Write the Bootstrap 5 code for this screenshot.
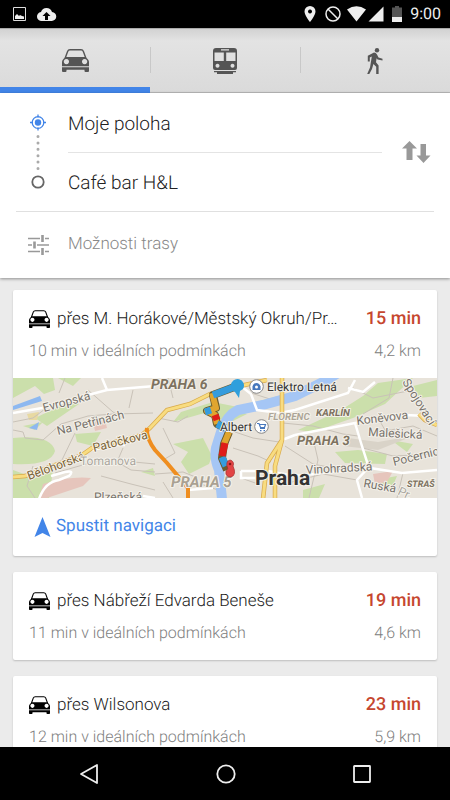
<!DOCTYPE html>
<html lang="cs">
<head>
<meta charset="utf-8">
<meta name="viewport" content="width=device-width, initial-scale=1">
<title>Trasa – Café bar H&amp;L</title>
<link href="https://cdn.jsdelivr.net/npm/bootstrap@5.3.0/dist/css/bootstrap.min.css" rel="stylesheet">
<style>
  body { font-family: Roboto, "Noto Sans", sans-serif; background: #ebebeb; color: #222; text-rendering: geometricPrecision; }
  svg { display: block; flex-shrink: 0; }
  .status-bar { height: 28px; background: #000; color: #eee; font-size: 16px; line-height: 28px; padding: 0 9px 0 13px; }
  .mode-tabs { height: 65px; background: linear-gradient(#d2d2d2, #e3e3e3 12px, #dadada); border-top: 1px solid #aaa; }
  .mode-tab { color: #555; border: 0; border-bottom: 1px solid #bbb; background: none; padding: 0; position: relative; }
  .mode-tab.active { border-bottom: 6px solid #4285e8; padding-top: 4px; }
  .mode-tab + .mode-tab::before { content: ""; position: absolute; left: 0; top: 18px; height: 26px; border-left: 1px solid #c8c8c8; }
  .search-panel { background: #fff; box-shadow: 0 1px 3px rgba(0,0,0,.4); position: relative; }
  .place-rail { width: 68px; padding-left: 24px; }
  .place-input { border: 0; height: 58px; width: 100%; padding: 1px 0 0; font-weight: 300; font-size: 19px; color: #222; background: none; text-rendering: inherit; }
  .place-input:first-child { height: 60px; border-bottom: 1px solid #e4e4e4; }
  .swap-btn { width: 68px; padding: 0 0 0 20px; border: 0; background: none; color: #999; }
  .options-btn { margin: 0 16px; border: 0; border-top: 1px solid #e0e0e0; background: none; color: #888; font-weight: 300; font-size: 17px; height: 67px; padding: 0 0 0 12px; gap: 19px; text-rendering: inherit; }
  .content-area { min-height: 0; padding: 12px 13px 0; }
  .route-card { background: #fff; border-radius: 2px; box-shadow: 0 1px 2px rgba(0,0,0,.2); margin-bottom: 16px; flex-shrink: 0; }
  .route-head { padding: 15px 16px 13px; height: 88px; }
  .route-line { gap: 7px; }
  .route-title { font-weight: 300; font-size: 17px; line-height: 28px; margin: 0; }
  .route-time { font-weight: 500; font-size: 18px; line-height: 28px; color: #c6472f; width: 60px; text-align: right; flex-shrink: 0; }
  .route-note { font-weight: 300; font-size: 16px; line-height: 20px; margin-top: 8px; color: #808080; }
  .route-map { height: 120px; width: 100%; }
  .start-link { color: #4285e8; font-size: 17px; height: 58px; padding-left: 21px; gap: 5px; }
  .system-bar { height: 53px; background: #000; padding: 0 20px; }
  .system-bar button { background: none; border: 0; padding: 0; }
  .map-name { font-size: 12px; fill: #77716b; }
  .map-name.on-main { fill: #7a6234; }
  .map-district { font-weight: 700; font-style: italic; fill: #7d7260; }
  .map-poi { font-size: 12px; fill: #333; }
  .halo text { paint-order: stroke; stroke: #f4f1ea; stroke-width: 2px; stroke-linejoin: round; }
</style>
<script src="https://cdn.jsdelivr.net/npm/bootstrap@5.3.0/dist/js/bootstrap.bundle.min.js"></script>
</head>
<body class="vh-100 d-flex flex-column overflow-hidden">

<svg width="0" height="0" class="position-absolute" aria-hidden="true">
  <symbol id="car" viewBox="0 0 27 23">
    <path d="M3.200 9 5.600 2.400Q6.200.8 8 .8H19Q20.800.8 21.400 2.400L23.800 9" fill="none" stroke="currentColor" stroke-width="1.400"/>
    <path fill="currentColor" fill-rule="evenodd" d="M3.300 8H23.700L26 10.500Q27 11.500 27 13V17.300H0V13Q0 11.500 1 10.500ZM4.400 10A2.600 2.600 0 1 0 4.410 10ZM22.600 10A2.600 2.600 0 1 0 22.610 10Z"/>
    <path fill="currentColor" d="M0 18.300H27V22Q27 23 26 23H23.500Q22.500 23 22.500 22V20.800H4.500V22Q4.500 23 3.500 23H1Q0 23 0 22Z"/>
  </symbol>
</svg>

<header class="status-bar d-flex align-items-center flex-shrink-0">
  <svg width="13" height="14" viewBox="0 0 13 14"><path d="M.5.5h12v13H.5z" fill="none" stroke="#ddd"/><path d="M2 12V9l2-2 2 2 1-1 2 1 2 .5V12z" fill="#eee"/></svg>
  <svg class="ms-2 me-auto" width="24" height="16" viewBox="0 0 24 16"><path fill="#eee" d="M8 15a4.500 4.500 0 0 1-1-9 5.800 5.800 0 0 1 11 0 4.500 4.500 0 0 1-.5 9z"/><path d="M12.500 6l4 4h-2.500v4h-3v-4H8.500z"/></svg>
  <svg width="12" height="16" viewBox="0 0 12 16"><path fill="#eee" fill-rule="evenodd" d="M6 0a5.500 5.500 0 0 1 5.500 5.500C11.500 9.500 6 16 6 16S.5 9.500.5 5.500A5.500 5.500 0 0 1 6 0m0 3.500a2 2 0 1 0 .01 0z"/></svg>
  <svg class="ms-2" width="18" height="16" viewBox="0 0 18 16"><g fill="none" stroke="#eee" stroke-width="1.500"><circle cx="9" cy="8" r="7"/><path d="M4 3l10 10"/></g></svg>
  <svg class="ms-1" width="42" height="16" viewBox="0 0 42 16"><path fill="#eee" d="M1 3.500Q10.500-3 20 3.500L10.500 15.500zM37.500.5v15H22.500z"/></svg>
  <svg class="ms-1" width="10" height="16" viewBox="0 0 10 16"><path fill="#555" d="M3 0h4v1.500h3V11H0V1.500h3z"/><path fill="#eee" d="M0 11h10v5H0z"/></svg>
  <span class="ms-2">9:00</span>
</header>

<nav class="mode-tabs d-flex flex-shrink-0" aria-label="Způsob dopravy">
  <button class="mode-tab active d-flex flex-fill w-100 justify-content-center align-items-center" aria-label="Autem" aria-pressed="true"><svg width="27" height="23"><use href="#car"/></svg></button>
  <button class="mode-tab d-flex flex-fill w-100 justify-content-center align-items-center" aria-label="Veřejnou dopravou">
    <svg width="24" height="26" viewBox="0 0 24 26"><path fill="currentColor" fill-rule="evenodd" d="M3 0H21Q24 0 24 3V20Q24 22 22 22H2Q0 22 0 20V3Q0 0 3 0ZM8 1.200V2.500H16V1.200ZM1.500 4.500V13H10.800V4.500ZM13.200 4.500V13H22.500V4.500ZM4.500 15.800A2 2 0 1 0 4.510 15.800ZM19.500 15.800A2 2 0 1 0 19.510 15.800Z"/><path fill="currentColor" d="M1 23H23V24.200H20V26H4V24.200H1z"/></svg>
  </button>
  <button class="mode-tab d-flex flex-fill w-100 justify-content-center align-items-center" aria-label="Pěšky">
    <svg width="16" height="26" viewBox="0 0 16 26"><circle cx="10" cy="2.200" r="2.200" fill="currentColor"/><path fill="currentColor" d="M7 4.500Q9 4.500 10 6.500L11.500 9.500 15.500 10.800V12.600L10.500 11.500 9.600 10.200 9 14.200 11.600 17.500V26H9.200V18.800L6.400 16 5 21 2.300 26H.2L3 19.500 4.800 8.500 2.800 9.500V13.500H.8V7.800Z"/></svg>
  </button>
</nav>

<section class="search-panel d-flex flex-column flex-shrink-0">
  <div class="d-flex align-items-center">
    <div class="place-rail flex-shrink-0">
      <svg width="28" height="118" viewBox="0 0 28 118" aria-hidden="true">
        <g stroke="#4285e8" fill="none" stroke-width="1.300"><circle cx="14" cy="29.500" r="5.800"/><path d="M14 21.500v3M14 34.500v3M6 29.500h3M19 29.500h3"/></g>
        <circle cx="14" cy="29.500" r="3.200" fill="#4285e8"/>
        <path d="M14 43.500V77" stroke="#aaa" stroke-width="3" stroke-linecap="round" stroke-dasharray="0 6.400"/>
        <circle cx="14" cy="89" r="5.700" fill="none" stroke="#666" stroke-width="1.800"/>
      </svg>
    </div>
    <div class="flex-grow-1">
      <input class="place-input d-block" type="text" value="Moje poloha" aria-label="Výchozí místo">
      <input class="place-input d-block" type="text" value="Café bar H&amp;L" aria-label="Cíl">
    </div>
    <button class="swap-btn flex-shrink-0" aria-label="Prohodit začátek a cíl">
      <svg width="29" height="22" viewBox="0 0 29 22"><path fill="currentColor" d="M7.500 0 15 7.500H10.500V19H4.500V7.500H0ZM21.500 22 14.500 14.500H18.500V3H24V14.500H28.500Z"/></svg>
    </button>
  </div>
  <button class="options-btn d-flex align-items-center text-start">
    <svg width="21" height="20" viewBox="0 0 21 20"><g stroke="#999" fill="none"><path stroke-width="1.300" d="M0 3.500h12M17 3.500h4M0 10h4M9 10h12M0 16.500h12M17 16.500h4"/><path stroke-width="2.600" d="M14.500 0v7M6.500 6.500v7M14.500 13v7"/></g></svg>
    Možnosti trasy
  </button>
</section>

<main class="content-area flex-grow-1 overflow-hidden d-flex flex-column">
  <article class="route-card">
    <div class="route-head">
      <div class="route-line d-flex align-items-center">
        <svg width="21" height="18" color="#000"><use href="#car"/></svg>
        <h2 class="route-title text-truncate flex-grow-1">přes M. Horákové/Městský Okruh/Pr…</h2>
        <span class="route-time">15 min</span>
      </div>
      <div class="route-note d-flex justify-content-between"><span>10 min v ideálních podmínkách</span><span>4,2 km</span></div>
    </div>
    <svg class="route-map" viewBox="0 0 424 120" preserveAspectRatio="xMidYMid slice" role="img" aria-label="Mapa trasy Prahou">
      <path fill="#e8e3da" d="M-200-50h824v220H-200z"/>
      <g fill="#cbdfab">
        <path d="M0 0H40L42 12 31 16 22 8 0 20zM45 0H68L60 8zM0 60Q38 56 42 73 38 88 0 86zM0 92 22 100 40 92 36 120H0zM22 40 60 22 66 26 34 48zM62 56 88 54 80 68 64 64z"/>
        <path d="M168 34 200 24 225 29 287 12V18L222 34 205 43 195 34 160 44zM160 66 190 60 199 78 196 86 176 96 168 84 175 74zM214 38 228 34 234 36 218 44z"/>
        <path d="M285 52 328 32 350 18 365 5 400 0 372 26 340 40 300 54zM322 74 345 72 374 76 372 86 332 85zM378 62 400 66 394 74zM400 8 424 2V18L406 20zM362 102 384 98 378 112zM290 112 312 106 306 120H290zM128 94 140 90 142 98zM10 48 30 44 22 52z"/>
      </g>
      <g fill="#e6c5bc"><path d="M30 106Q56 98 78 100L70 108 34 120H26zM80 44 92 42 94 50 82 53zM360 96 380 93 374 104 362 106z"/></g>
      <path fill="#d9d3c8" d="M335 60 365 64 400 58 365 72 330 68z"/>
      <path fill="#e8d9a2" d="M14 36 26 34 24 42 16 42z"/>
      <g stroke="#c9c2b8" fill="none" stroke-width="1">
        <path d="M0 52 10 54 12 60 30 62 48 46 75 38 100 36 140 35M62 55 48 84M42 95 80 84 100 82 142 86M88 98 118 106 142 112M110 70 104 84 118 92 142 94M75 12 100 34 110 40M52 0 46 15M0 44 20 40 36 28M120 12 116 30M150 50 162 75 150 82M145 40 165 44 175 38M142 96 170 94 185 100M155 0 160 20M220 70 245 78 258 84M222 54 240 60 266 64M228 100 245 106M272 68 300 86 330 92M270 45 300 48 330 56 345 58M275 105 310 96 344 102M350 70 380 78 424 76M360 55 400 48 424 58M365 40 372 52 390 56M380 0 376 20 350 36M340 10 360 20 400 12M390 95 384 120M300 60 305 82 296 120M182 104 205 112M20 88 14 108 22 120M235 14 260 22M150 104 160 120"/>
      </g>
      <path d="M0 28 27 18 29 23 0 32z" fill="#8db8f0"/><path d="M16 50 26 44 24 52z" fill="#8db8f0"/>
      <path d="M330-8 312 3 282 18 250 27 225 32Q213 38 208 54L203 70Q201 80 206 92L209 121" fill="none" stroke="#a5c6f5" stroke-width="10"/>
      <g fill="none" stroke="#fff" stroke-width="2.500">
        <path d="M0 35 29 30 75 17 94 12 142 8M89 0 94 12M26 121Q32 104 46 102L56 98Q62 92 52 94L38 98M79 72 100 67 112 67M228 8 238 16 244 32 267 35 282 32 335 15 342 2M335 10 350 14 362 4M228 93 255 93 282 98 357 90M228 93V100H252M282 57 342 45 392 37 415 38M342 45 348 65 356 90M357 90 389 95 424 92M355 90 344 102 349 120M269 62 282 57M175 112 200 110M142 120 130 118"/>
      </g>
      <g fill="none">
        <path stroke="#d9ab4c" stroke-width="4.500" d="M0 99 12 98 69 77 79 70 129 57 137 50 154 32 177 26 197 16 227 8 254 2M269 0V62L254 85 250 121M269 62 262 88 262 121M424 47 412 42 406 36"/>
        <path stroke="#f8dc80" stroke-width="3" d="M0 99 12 98 69 77 79 70 129 57 137 50 154 32 177 26 197 16 227 8 254 2M269 0V62L254 85 250 121M269 62 262 88 262 121M424 47 412 42 406 36"/>
        <path stroke="#ef8e20" stroke-width="4" d="M134 50Q133 60 142 72L154 85 175 110V121"/>
      </g>

      <g class="halo">
        <text class="map-name" transform="translate(31 34) rotate(-15)">Evropská</text>
        <text class="map-name" transform="translate(45 57) rotate(-14)">Na Petřinách</text>
        <text class="map-name on-main" transform="translate(81 74) rotate(-14)">Patočkova</text>
        <text class="map-name on-main" transform="translate(16 102) rotate(-20)">Bělohorská</text>
        <text class="map-name" x="67" y="87" fill-opacity=".6">Tomanova</text>
        <text class="map-name" x="81" y="123">Plzeňská</text>
        <text class="map-name" transform="translate(344 47) rotate(-7)">Koněvova</text>
        <text class="map-name" transform="translate(355 58) rotate(3)">Malešická</text>
        <text class="map-name" transform="translate(381 88) rotate(-14)">Počernic</text>
        <text class="map-name" transform="translate(293 96) rotate(-3)">Vinohradská</text>
        <text class="map-name" transform="translate(350 109) rotate(10)">Ruská</text>
        <text class="map-name" transform="translate(384 116) rotate(25)" fill-opacity=".6">Pr.</text>
        <text class="map-name" transform="translate(389 4) rotate(58)">Spojovací</text>
        <text class="map-district" x="138" y="11" font-size="14">PRAHA 6</text>
        <text class="map-district" x="158" y="109" font-size="15" fill-opacity=".65">PRAHA 5</text>
        <text class="map-district" x="284" y="67" font-size="13">PRAHA 3</text>
        <text class="map-district" x="303" y="38" font-size="10">KARLÍN</text>
        <text class="map-district" x="255" y="42" font-size="10" fill-opacity=".6">FLORENC</text>
        <text class="map-district" x="394" y="109" font-size="9">STRAŠ</text>
      </g>

      <g fill="none" stroke-linejoin="round">
        <path d="M224 8 200 17 203 30 194 33 202 37 204 46 212 50M216 54 211 66 209 80 214 92" stroke="#6b5b2d" stroke-width="8"/>
        <path d="M199 15 203 30 194 33 202 37 204 46M216 54 211 66" stroke="#e0a52f" stroke-width="6"/>
        <path d="M224 8 200 17M204 46 212 50M209 79 213 88M192 34 198 32" stroke="#359cdd" stroke-width="7"/>
        <path d="M202 37 204 42M212 65 209 78" stroke="#de1d19" stroke-width="7"/>
      </g>
      <path d="M218 8a6.500 6.500 0 1 1 12 3l-3 2-1 7-4-6q-4-2-4-6" fill="#2f9fdc"/>
      <path d="M217 82a4 4 0 0 1 3 6q4 9-2 11-6 0-5-6 3-2 1-5-1-5 3-6" fill="#e24444" stroke="#a62d2d" stroke-width=".7"/><circle cx="217" cy="86" r="1.300" fill="#841616"/>
      <g fill="#fff" stroke="#888"><circle cx="243.500" cy="8.500" r="6.800"/><circle cx="248.500" cy="48.500" r="6.800"/></g>
      <path d="M239.500 12V8.500q1-3.500 4-3.500t4 3.500V12z" fill="#4778bd"/><circle cx="243.500" cy="9" r="1.500" fill="#fff"/>
      <path d="M244 45.500h2l1.500 4h4l1-3h-6M247 50.500h5" stroke="#4778bd" fill="none" stroke-width="1.200"/><path d="M247 52h1.500v1.200H247zM250.500 52h1.500v1.200h-1.500z" fill="#4778bd"/>
      <g class="halo">
        <text class="map-poi" x="254" y="13">Elektro Letná</text>
        <text class="map-poi" x="207" y="53">Albert</text>
        <text x="242" y="107" font-size="21" font-weight="700" fill="#333">Praha</text>
      </g>
    </svg>
    <a class="start-link d-flex align-items-center text-decoration-none" href="#navigace">
      <svg width="17" height="20" viewBox="0 0 17 20"><path fill="currentColor" d="M8.500 0 16.500 20 8.500 16 .5 20z"/></svg>
      Spustit navigaci
    </a>
  </article>

  <article class="route-card">
    <div class="route-head">
      <div class="route-line d-flex align-items-center">
        <svg width="21" height="18" color="#000"><use href="#car"/></svg>
        <h2 class="route-title text-truncate flex-grow-1">přes Nábřeží Edvarda Beneše</h2>
        <span class="route-time">19 min</span>
      </div>
      <div class="route-note d-flex justify-content-between"><span>11 min v ideálních podmínkách</span><span>4,6 km</span></div>
    </div>
  </article>

  <article class="route-card">
    <div class="route-head">
      <div class="route-line d-flex align-items-center">
        <svg width="21" height="18" color="#000"><use href="#car"/></svg>
        <h2 class="route-title text-truncate flex-grow-1">přes Wilsonova</h2>
        <span class="route-time">23 min</span>
      </div>
      <div class="route-note d-flex justify-content-between"><span>12 min v ideálních podmínkách</span><span>5,9 km</span></div>
    </div>
  </article>
</main>

<footer class="system-bar d-flex justify-content-around align-items-center flex-shrink-0">
  <button aria-label="Zpět"><svg width="20" height="22" viewBox="0 0 20 22"><path d="M18 2v18L2 11z" fill="none" stroke="#eee" stroke-width="1.800" stroke-linejoin="round"/></svg></button>
  <button aria-label="Domů"><svg width="20" height="20" viewBox="0 0 20 20"><circle cx="10" cy="10" r="8.700" fill="none" stroke="#eee" stroke-width="1.800"/></svg></button>
  <button aria-label="Poslední aplikace"><svg width="18" height="18" viewBox="0 0 18 18"><rect x="1" y="1" width="16" height="16" rx=".5" fill="none" stroke="#eee" stroke-width="1.800"/></svg></button>
</footer>
</body>
</html>
